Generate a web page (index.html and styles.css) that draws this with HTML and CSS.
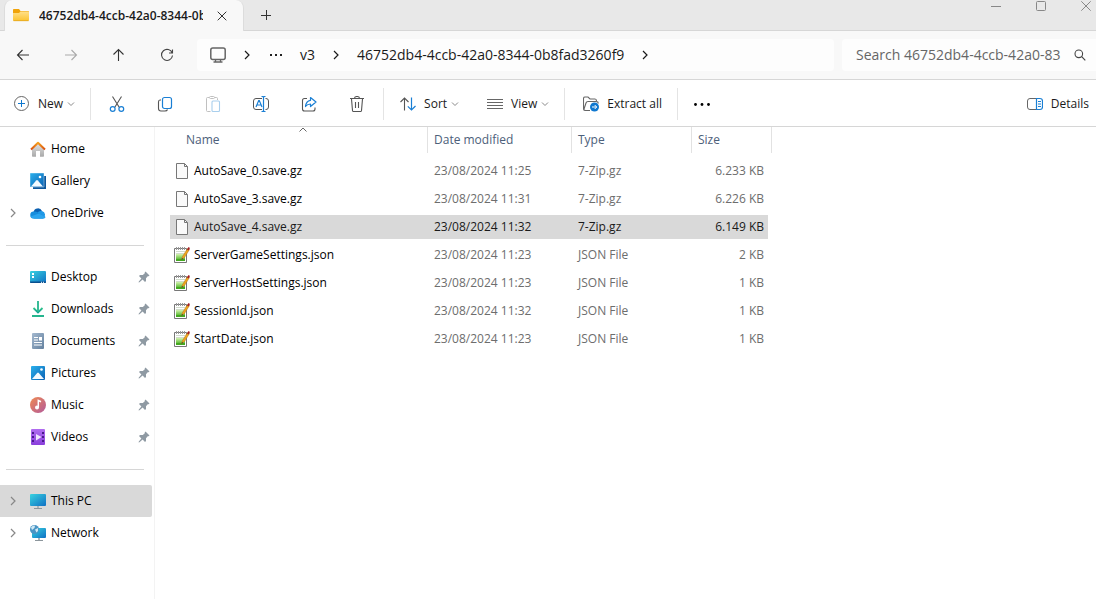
FILE: index.html
```html
<!DOCTYPE html>
<html lang="en">
<head>
    <meta charset="UTF-8">
    <meta name="viewport" content="width=device-width, initial-scale=1.0">
    <title>46752db4-4ccb-42a0-8344-0b8fad3260f9</title>
    <link rel="stylesheet" href="styles.css">
</head>
<body>
    <!-- Shared icons -->
    <svg class="sprite" aria-hidden="true">
        <defs>
            <linearGradient id="blue" x1="0" y1="0" x2="1" y2="1"><stop offset="0" stop-color="#2bb0ec"/><stop offset="1" stop-color="#0a62b4"/></linearGradient>
            <linearGradient id="teal" x1="0" y1="0" x2="1" y2="1"><stop offset="0" stop-color="#38d3e0"/><stop offset="1" stop-color="#0f70c4"/></linearGradient>
            <linearGradient id="green" x1="0" y1="0" x2="0" y2="1"><stop offset="0" stop-color="#d4f3b0"/><stop offset="1" stop-color="#35a80c"/></linearGradient>
            <linearGradient id="down" x1="0" y1="0" x2="0" y2="1"><stop offset="0" stop-color="#2fc48a"/><stop offset="1" stop-color="#10a094"/></linearGradient>
            <linearGradient id="music" x1="0" y1="0" x2="1" y2="1"><stop offset="0" stop-color="#f08a50"/><stop offset="1" stop-color="#b25a9c"/></linearGradient>
            <linearGradient id="video" x1="0" y1="0" x2="0" y2="1"><stop offset="0" stop-color="#b06cf0"/><stop offset="1" stop-color="#8a3fdc"/></linearGradient>
            <linearGradient id="doc" x1="0" y1="0" x2="1" y2="1"><stop offset="0" stop-color="#a3b8cf"/><stop offset="1" stop-color="#64819f"/></linearGradient>
            <linearGradient id="wall" x1="0" y1="0" x2="0" y2="1"><stop offset="0" stop-color="#e6e6e6"/><stop offset="1" stop-color="#a9a9a9"/></linearGradient>
            <linearGradient id="roof" x1="0" y1="0" x2="0" y2="1"><stop offset="0" stop-color="#f6a01c"/><stop offset="1" stop-color="#d94f10"/></linearGradient>
            <linearGradient id="yellow" x1="0" y1="0" x2="0" y2="1"><stop offset="0" stop-color="#ffe08a"/><stop offset="1" stop-color="#fcc32f"/></linearGradient>
        </defs>
        <symbol id="file" viewBox="0 0 16 16">
            <path d="M2.500.5h8l3 3v12h-11z" fill="#fafafa" stroke="#777"/>
            <path d="M10.500.5v3h3" fill="none" stroke="#777"/>
        </symbol>
        <symbol id="json" viewBox="0 0 16 16">
            <path d="M.5 1.500h12v14H.5z" fill="#fff" stroke="#777"/>
            <path d="M2 4.500h9M2 6.500h9" stroke="#d0dccb"/>
            <path d="M2 7h9v7H2z" fill="url(#green)"/>
            <path d="M2 12h9v2H2z" fill="#44a820"/>
            <path d="M2.500 0v3M4.500 0v3M6.500 0v3M8.500 0v3M10.500 0v3" stroke="#999"/>
            <path d="M7.500 12.500l1-3 5-8 2 1-5 8z" fill="#f0a51c" stroke="#a87622" stroke-width=".5"/>
            <path d="M13 2.500L14.500 0l1.500 1-1.500 2.500z" fill="#a31b25"/>
            <path d="M7.500 13l.5-2 1 .8z" fill="#333"/>
        </symbol>
        <symbol id="pin" viewBox="0 0 12 12">
            <path d="M7.500.5L11.500 4.500l-1 .8-.8-.1-1.700 2 0 2.800-1 1-2.400-2.400L1.500 11.200l-.9.200.2-.9L3.400 7.400 1 5l1-1 2.800 0L6.800 2.300l-.1-.8z" fill="#8f9aa3"/>
        </symbol>
        <symbol id="next" viewBox="0 0 10 10">
            <path d="M3 1l4 4-4 4" fill="none" stroke="currentColor" stroke-width="1.200"/>
        </symbol>
        <symbol id="drop" viewBox="0 0 8 8">
            <path d="M1 2.500l3 3 3-3" fill="none" stroke="#8a8a8a"/>
        </symbol>
    </svg>

    <!-- Tab strip -->
    <header class="tab-strip">
        <div class="tab">
            <svg class="icon" viewBox="0 0 16 16"><path d="M0 1.500Q0 1 1 1h5l1.500 2H15q1 0 1 1v4H0z" fill="#f0a30a"/><path d="M0 5h6l1.500-1.500H15q1 0 1 1V12q0 1-1 1H1q-1 0-1-1z" fill="url(#yellow)"/><path d="M.5 12.700h15" stroke="#e0a01c" stroke-width=".7"/></svg>
            <span class="tab-title">46752db4-4ccb-42a0-8344-0b8fad3260f9</span>
            <button class="plain-button" aria-label="Close tab"><svg class="icon-small" viewBox="0 0 10 10"><path d="M.7.7l8.600 8.600M9.300.7L.7 9.300" stroke="#333"/></svg></button>
        </div>
        <button class="plain-button new-tab" aria-label="New tab"><svg class="icon-small" viewBox="0 0 10 10"><path d="M5.500 0v10M0 5.500h10" stroke="#333"/></svg></button>
        <div class="window-buttons">
            <button class="plain-button" aria-label="Minimize"><svg class="icon-small" viewBox="0 0 10 10"><path d="M0 5.500h10" stroke="#888"/></svg></button>
            <button class="plain-button" aria-label="Maximize"><svg class="icon-small" viewBox="0 0 10 10"><rect x=".5" y=".5" width="9" height="9" rx="1" fill="none" stroke="#888"/></svg></button>
            <button class="plain-button" aria-label="Close"><svg class="icon-small" viewBox="0 0 10 10"><path d="M.3.3l9.400 9.400M9.700.3L.3 9.700" stroke="#888"/></svg></button>
        </div>
    </header>

    <!-- Navigation and address -->
    <div class="nav-bar">
        <div class="nav-buttons">
            <button class="plain-button" aria-label="Back"><svg class="icon" viewBox="0 0 16 16"><path d="M14 8H2.500M7.500 3l-5 5 5 5" fill="none" stroke="#333" stroke-width="1.100"/></svg></button>
            <button class="plain-button" aria-label="Forward" disabled><svg class="icon" viewBox="0 0 16 16"><path d="M2 8h11.500M8.500 3l5 5-5 5" fill="none" stroke="#aaa" stroke-width="1.100"/></svg></button>
            <button class="plain-button" aria-label="Up"><svg class="icon" viewBox="0 0 16 16"><path d="M7.500 14V2.500M2.500 7.500l5-5 5 5" fill="none" stroke="#333" stroke-width="1.100"/></svg></button>
            <button class="plain-button" aria-label="Refresh"><svg class="icon" viewBox="0 0 16 16"><path d="M13.200 6A5.500 5.500 0 1 0 13.500 8.500M13.500 2.500V6H10" fill="none" stroke="#444" stroke-width="1.100"/></svg></button>
        </div>
        <nav class="address-bar" aria-label="Address">
            <svg class="icon" viewBox="0 0 16 16"><rect x=".8" y="1" width="14.400" height="11.500" rx="2" fill="none" stroke="#666" stroke-width="1.500"/><path d="M5.500 13v1.700M10.500 13v1.700M3.500 15h9" stroke="#666" stroke-width="1.300"/></svg>
            <svg class="crumb-arrow"><use href="#next"/></svg>
            <button class="plain-button" aria-label="More folders"><svg class="icon" viewBox="0 0 16 16"><path d="M2 7h2v2H2zM7 7h2v2H7zM12 7h2v2h-2z" fill="#222"/></svg></button>
            <a class="crumb" href="#">v3</a>
            <svg class="crumb-arrow"><use href="#next"/></svg>
            <a class="crumb" href="#">46752db4-4ccb-42a0-8344-0b8fad3260f9</a>
            <svg class="crumb-arrow"><use href="#next"/></svg>
        </nav>
        <div class="search-box">
            <input type="text" class="search-input" aria-label="Search" placeholder="Search 46752db4-4ccb-42a0-83">
            <svg class="search-icon" viewBox="0 0 12 12"><circle cx="4.800" cy="4.800" r="3.800" fill="none" stroke="#444" stroke-width="1.100"/><path d="M7.700 7.700L11.300 11.300" stroke="#444" stroke-width="1.200"/></svg>
        </div>
    </div>

    <!-- Commands -->
    <div class="toolbar">
        <div class="tool-group">
            <button class="tool-button">
                <svg class="icon" viewBox="0 0 16 16"><circle cx="7.500" cy="7.500" r="7" fill="none" stroke="#666"/><path d="M7.500 4v7M4 7.500h7" stroke="#0f78d0"/></svg>
                New
                <svg class="drop"><use href="#drop"/></svg>
            </button>
        </div>
        <div class="tool-group icon-group">
            <button class="icon-button" aria-label="Cut"><svg class="icon" viewBox="0 0 16 16"><path d="M3.500.5l6.700 10.700M12.500.5L5.800 11.200" stroke="#555" stroke-width="1.100"/><circle cx="3.700" cy="13" r="2.400" fill="none" stroke="#1a7fd4" stroke-width="1.200"/><circle cx="12.300" cy="13" r="2.400" fill="none" stroke="#1a7fd4" stroke-width="1.200"/></svg></button>
            <button class="icon-button" aria-label="Copy"><svg class="icon" viewBox="0 0 16 16"><path d="M4 4H3Q1.500 4 1.500 6v6.500Q1.500 15 4 15h4q2 0 2.500-1.500" fill="none" stroke="#555" stroke-width="1.100"/><rect x="5.500" y="1.500" width="9" height="11" rx="2" fill="#fff" stroke="#1a7fd4" stroke-width="1.200"/></svg></button>
            <button class="icon-button" aria-label="Paste" disabled><svg class="icon" viewBox="0 0 16 16"><path d="M5.500 15.500h-3q-1 0-1-1v-12q0-1 1-1h2M9.500 1.500h2q1 0 1 1V4" fill="none" stroke="#c0c0c0"/><rect x="4.500" y=".5" width="5" height="2" rx="1" fill="#fff" stroke="#c0c0c0"/><rect x="7" y="5" width="7.500" height="10.500" rx="1" fill="#fff" stroke="#a9cfed" stroke-width="1.100"/></svg></button>
            <button class="icon-button" aria-label="Rename"><svg class="icon" viewBox="0 0 16 16"><path d="M9 2.500H3Q.5 2.500.5 5v6q0 2.500 2.500 2.500h6M12.500 2.500h.5q2.500 0 2.500 2.500v6q0 2.500-2.500 2.500h-.5" fill="none" stroke="#555"/><path d="M3 11l2.700-6.500h.6L9 11M4 9h4M10.500 1v14M8.500.5h1q1 0 1 1 0-1 1-1h1M8.500 15.500h1q1 0 1-1 0 1 1 1h1" fill="none" stroke="#1a7fd4" stroke-width="1.200"/></svg></button>
            <button class="icon-button" aria-label="Share"><svg class="icon" viewBox="0 0 16 16"><path d="M6 2.500H3.500q-2 0-2 2V13q0 2 2 2H12q2 0 2-2v-1.500" fill="none" stroke="#555" stroke-width="1.100"/><path d="M9.500 1.500L15 6l-5.500 4.500V8Q6.500 8 4.500 10.500 5 5 9.500 4.300z" fill="#fff" stroke="#1a7fd4" stroke-width="1.200" stroke-linejoin="round"/></svg></button>
            <button class="icon-button" aria-label="Delete"><svg class="icon" viewBox="0 0 16 16"><path d="M1 2.500h14M5.500 2.500Q5.500.5 8 .5t2.500 2M2.500 3l1 11.500q.1 1 1 1h7q.9 0 1-1l1-11.500M6.500 6v6M9.500 6v6" fill="none" stroke="#555" stroke-width="1.100"/></svg></button>
        </div>
        <div class="tool-group wide-group">
            <button class="tool-button">
                <svg class="icon" viewBox="0 0 16 16"><path d="M4.500 14.500V2M.5 6l4-4 4 4" fill="none" stroke="#555" stroke-width="1.100"/><path d="M11.500 1.500V14M7.800 10.300l3.700 3.700 4-4" fill="none" stroke="#1a7fd4" stroke-width="1.200"/></svg>
                Sort
                <svg class="drop"><use href="#drop"/></svg>
            </button>
            <button class="tool-button">
                <svg class="icon" viewBox="0 0 16 16"><path d="M0 3.500h16M0 6.500h16M0 9.500h16M0 12.500h16" stroke="#666"/></svg>
                View
                <svg class="drop"><use href="#drop"/></svg>
            </button>
        </div>
        <div class="tool-group extract-group">
            <button class="tool-button">
                <svg class="icon" viewBox="0 0 16 16"><path d="M7 14.500H2.500q-2 0-2-2v-10q0-1.500 1.500-1.500h3l2 2h5q1.500 0 1.500 2M1 13l2-6q.5-1.500 2-1.500h8q2.500 0 2 2" fill="none" stroke="#666" stroke-width="1.100"/><circle cx="11.500" cy="11" r="4.500" fill="#0f78d0"/><path d="M9 11h4.500M11.700 9l2 2-2 2" fill="none" stroke="#fff"/></svg>
                Extract all
            </button>
        </div>
        <button class="icon-button" aria-label="See more"><svg class="icon" viewBox="0 0 16 16"><circle cx="1.500" cy="8.500" r="1.400"/><circle cx="8" cy="8.500" r="1.400"/><circle cx="14.500" cy="8.500" r="1.400"/></svg></button>
        <button class="tool-button details-button">
            <svg class="icon" viewBox="0 0 16 16"><path d="M9.500 2.500H3Q.5 2.500.5 5v6q0 2.500 2.500 2.500h6.500" fill="none" stroke="#666"/><path d="M9.500 2.500H13q2.500 0 2.500 2.500v6q0 2.500-2.500 2.500H9.500zM11 5.500h3M11 8h3M11 10.500h3" fill="none" stroke="#1a7fd4" stroke-width="1.200"/></svg>
            Details
        </button>
    </div>

    <div class="content">
        <!-- Sidebar -->
        <nav class="sidebar" aria-label="Folders">
            <a class="side-item" href="#">
                <svg class="icon" viewBox="0 0 16 16"><path d="M2 7l6-5.500L14 7v8q0 .7-.7.700H10V10H6v5.700H2.700Q2 15.700 2 15z" fill="url(#wall)"/><path d="M1 8.500L8 1.800l7 6.700" fill="none" stroke="url(#roof)" stroke-width="2" stroke-linejoin="round"/></svg>
                <span class="side-label">Home</span>
            </a>
            <a class="side-item" href="#">
                <svg class="icon" viewBox="0 0 16 16"><path d="M3 3h13v13H3z" fill="#0c579c"/><path d="M0 0h14v14H0z" fill="url(#blue)" stroke="#fff" stroke-width=".4"/><path d="M1 13.500l5.200-6q.8-.8 1.600 0l5.200 6z" fill="#f3faff"/><circle cx="10" cy="4" r="1.300" fill="#fff"/></svg>
                <span class="side-label">Gallery</span>
            </a>
            <a class="side-item" href="#">
                <svg class="expand"><use href="#next"/></svg>
                <svg class="icon" viewBox="0 0 16 16"><path d="M3.500 7A4.500 4.500 0 0 1 12 6l-3 5z" fill="#0a5fb0"/><path d="M12 6a4 4 0 0 1 .8 7.500H4L8 7q2-1.500 4-1z" fill="#1f98e6"/><path d="M3.500 13.500A3.500 3.500 0 0 1 4 6.500q2-.3 4 1l7.500 4.500q-.8 1.500-2.700 1.500z" fill="#168ddd"/><path d="M3.500 13.500Q1 13.300.5 11.500L9 8.500l6.500 3.500q-.8 1.500-2.700 1.500z" fill="#2ba4ee"/></svg>
                <span class="side-label">OneDrive</span>
            </a>
            <hr class="side-line">
            <a class="side-item" href="#">
                <svg class="icon" viewBox="0 0 16 16"><rect y="2" width="16" height="12" rx="1" fill="url(#teal)"/><path d="M2 4h2v2H2zM2 7h2v2H2z" fill="#fff"/><path d="M0 12.500h16v.5q0 1-1 1H1q-1 0-1-1z" fill="#0a4f8e"/><path d="M11 13.300h1M13 13.300h1" stroke="#fff"/></svg>
                <span class="side-label">Desktop</span>
                <svg class="pin"><use href="#pin"/></svg>
            </a>
            <a class="side-item" href="#">
                <svg class="icon" viewBox="0 0 16 16"><path d="M3.500 7L8 11.500 12.500 7" fill="none" stroke="url(#down)" stroke-width="1.800"/><path d="M7.100 0h1.800v11H7.100zM2 14h12v2H2z" fill="#25b58e"/></svg>
                <span class="side-label">Downloads</span>
                <svg class="pin"><use href="#pin"/></svg>
            </a>
            <a class="side-item" href="#">
                <svg class="icon" viewBox="0 0 16 16"><rect x="2" y="0" width="12" height="16" rx="1" fill="url(#doc)"/><path d="M4 4.500h4M4 7h4M4 9.500h8M4 12h8" stroke="#fff"/><path d="M9 4h3v3.500H9z" fill="#fff"/></svg>
                <span class="side-label">Documents</span>
                <svg class="pin"><use href="#pin"/></svg>
            </a>
            <a class="side-item" href="#">
                <svg class="icon" viewBox="0 0 16 16"><rect x="1" y="1" width="14" height="14" rx="1" fill="url(#blue)"/><path d="M2 14l5.200-6q.8-.8 1.600 0L14 14z" fill="#f3faff"/><circle cx="11.500" cy="4.500" r="1.300" fill="#fff"/></svg>
                <span class="side-label">Pictures</span>
                <svg class="pin"><use href="#pin"/></svg>
            </a>
            <a class="side-item" href="#">
                <svg class="icon" viewBox="0 0 16 16"><circle cx="8" cy="8" r="8" fill="url(#music)"/><circle cx="7" cy="10.500" r="2" fill="#fff"/><path d="M8.300 10.500V3.500l2.700 1.200" fill="none" stroke="#fff" stroke-width="1.500"/></svg>
                <span class="side-label">Music</span>
                <svg class="pin"><use href="#pin"/></svg>
            </a>
            <a class="side-item" href="#">
                <svg class="icon" viewBox="0 0 16 16"><rect x="1" y="0" width="14" height="16" rx="1" fill="url(#video)"/><path d="M2 3h2v2H2zM2 7h2v2H2zM2 11h2v2H2zM12 3h2v2h-2zM12 7h2v2h-2zM12 11h2v2h-2z" fill="#4a1a8c"/><path d="M6 5l5.500 3L6 11.500z" fill="#f0e4ff"/></svg>
                <span class="side-label">Videos</span>
                <svg class="pin"><use href="#pin"/></svg>
            </a>
            <hr class="side-line">
            <a class="side-item active" href="#" aria-current="page">
                <svg class="expand"><use href="#next"/></svg>
                <svg class="icon" viewBox="0 0 16 16"><rect y="1" width="16" height="12" rx="1" fill="url(#teal)"/><path d="M7 13h2v2H7z" fill="#aab2b8"/><path d="M4 15.500h8" stroke="#8c969c"/></svg>
                <span class="side-label">This PC</span>
            </a>
            <a class="side-item" href="#">
                <svg class="expand"><use href="#next"/></svg>
                <svg class="icon" viewBox="0 0 16 16"><rect x="2" y="3" width="14" height="10" rx="1" fill="url(#teal)"/><path d="M8 13h2v2H8z" fill="#aab2b8"/><path d="M5 15.500h8" stroke="#8c969c"/><circle cx="4.500" cy="4.500" r="4.500" fill="#4a94c4"/><path d="M1 2.500Q3 0 5 .8L4.500 3 2 5zM5 4.500l3-1.500q.7 3-1.500 4.500z" fill="#cfe9f5"/></svg>
                <span class="side-label">Network</span>
            </a>
        </nav>

        <!-- File list -->
        <main class="file-list">
            <table class="files">
                <thead>
                    <tr>
                        <th class="col-name" aria-sort="ascending"><span class="head-label">Name</span><svg class="sort-arrow" viewBox="0 0 8 5"><path d="M.5 4.500L4 1l3.500 3.500" fill="none" stroke="#666"/></svg></th>
                        <th class="col-date"><span class="head-label">Date modified</span></th>
                        <th class="col-type"><span class="head-label">Type</span></th>
                        <th class="col-size"><span class="head-label">Size</span></th>
                    </tr>
                </thead>
                <tbody>
                    <tr>
                        <td><span class="file-name"><svg class="icon"><use href="#file"/></svg>AutoSave_0.save.gz</span></td>
                        <td>23/08/2024 11:25</td><td>7-Zip.gz</td><td>6.233 KB</td>
                    </tr>
                    <tr>
                        <td><span class="file-name"><svg class="icon"><use href="#file"/></svg>AutoSave_3.save.gz</span></td>
                        <td>23/08/2024 11:31</td><td>7-Zip.gz</td><td>6.226 KB</td>
                    </tr>
                    <tr class="selected">
                        <td><span class="file-name"><svg class="icon"><use href="#file"/></svg>AutoSave_4.save.gz</span></td>
                        <td>23/08/2024 11:32</td><td>7-Zip.gz</td><td>6.149 KB</td>
                    </tr>
                    <tr>
                        <td><span class="file-name"><svg class="icon"><use href="#json"/></svg>ServerGameSettings.json</span></td>
                        <td>23/08/2024 11:23</td><td>JSON File</td><td>2 KB</td>
                    </tr>
                    <tr>
                        <td><span class="file-name"><svg class="icon"><use href="#json"/></svg>ServerHostSettings.json</span></td>
                        <td>23/08/2024 11:23</td><td>JSON File</td><td>1 KB</td>
                    </tr>
                    <tr>
                        <td><span class="file-name"><svg class="icon"><use href="#json"/></svg>SessionId.json</span></td>
                        <td>23/08/2024 11:32</td><td>JSON File</td><td>1 KB</td>
                    </tr>
                    <tr>
                        <td><span class="file-name"><svg class="icon"><use href="#json"/></svg>StartDate.json</span></td>
                        <td>23/08/2024 11:23</td><td>JSON File</td><td>1 KB</td>
                    </tr>
                </tbody>
            </table>
        </main>
    </div>
</body>
</html>
```
FILE: styles.css
```css
* {
    box-sizing: border-box;
}
body {
    margin: 0;
    min-height: 100vh;
    display: flex;
    flex-direction: column;
    font-family: "Open Sans", "Noto Sans", sans-serif;
    font-size: 12px;
    line-height: 16px;
    color: #000;
    background-color: #fff;
}
a {
    color: inherit;
    text-decoration: none;
}
button {
    font: inherit;
    color: #1a1a1a;
    background: none;
    border: none;
    padding: 0;
}
svg {
    display: block;
    flex: none;
}
.sprite {
    position: absolute;
    width: 0;
    height: 0;
}
.icon {
    width: 16px;
    height: 16px;
}
.icon-small {
    width: 10px;
    height: 10px;
}
.plain-button {
    display: flex;
    align-items: center;
    justify-content: center;
}

/* Tab strip */
.tab-strip {
    display: flex;
    height: 31px;
    padding-left: 4px;
    background-color: #e8e8e8;
    border-bottom: 1px solid #d6d6d6;
}
.tab {
    display: flex;
    align-items: center;
    width: 240px;
    height: 31px;
    padding: 0 16px 0 8px;
    background-color: #f8f8f8;
    border: 1px solid #dcdcdc;
    border-width: 0 1px;
    border-radius: 8px 8px 0 0;
}
.tab-title {
    flex: 1;
    margin: 0 14px 0 10px;
    overflow: hidden;
    white-space: nowrap;
    font-weight: 600;
    color: #1a1a1a;
}
.new-tab {
    width: 44px;
}
.window-buttons {
    display: flex;
    align-items: flex-start;
    gap: 35px;
    margin-left: auto;
    padding: 1px 5px 0 0;
}

/* Navigation bar */
.nav-bar {
    display: flex;
    align-items: center;
    gap: 8px;
    height: 49px;
    background-color: #f8f8f8;
    border-bottom: 1px solid #d6d6d6;
}
.nav-buttons {
    display: flex;
    gap: 32px;
    padding: 0 14px 0 15px;
}
.address-bar {
    display: flex;
    flex: 1;
    align-items: center;
    height: 32px;
    padding-left: 13px;
    background-color: #fdfdfd;
    border-radius: 4px;
    font-size: 14px;
    color: #1a1a1a;
}
.crumb-arrow {
    width: 10px;
    height: 10px;
    margin: 0 16px;
}
.crumb {
    white-space: nowrap;
}
.address-bar .plain-button {
    margin-right: 16px;
}
.search-box {
    display: flex;
    align-items: center;
    width: 254px;
    height: 32px;
    padding: 0 10px 0 14px;
    background-color: #fdfdfd;
    border-radius: 4px 0 0 4px;
}
.search-input {
    flex: 1;
    min-width: 0;
    margin-right: 12px;
    padding: 0;
    border: none;
    outline: none;
    background: none;
    font: inherit;
    font-size: 14px;
}
.search-input::placeholder {
    color: #666;
}
.search-icon {
    width: 12px;
    height: 12px;
}

/* Toolbar */
.toolbar {
    display: flex;
    align-items: center;
    height: 47px;
    padding-top: 2px;
    border-bottom: 1px solid #d6d6d6;
}
.tool-group {
    display: flex;
    align-items: center;
    height: 32px;
    padding: 0 15px 0 14px;
    border-right: 1px solid #e4e4e4;
}
.icon-group {
    padding: 0 2px;
}
.wide-group {
    gap: 28px;
    padding: 0 15px 0 16px;
}
.extract-group {
    padding: 0 15px 0 18px;
}
.tool-button {
    display: flex;
    align-items: center;
    gap: 8px;
    white-space: nowrap;
}
.icon-button {
    display: flex;
    align-items: center;
    justify-content: center;
    width: 48px;
    height: 32px;
}
.drop {
    width: 8px;
    height: 8px;
    margin-left: -4px;
}
.details-button {
    margin-left: auto;
    padding-right: 7px;
}

/* Sidebar */
.content {
    display: flex;
    flex: 1;
}
.sidebar {
    width: 155px;
    padding: 6px 2px 0 0;
    border-right: 1px solid #f3f3f3;
}
.side-item {
    display: flex;
    align-items: center;
    height: 32px;
    padding: 0 2px 0 30px;
}
.side-item.active {
    background-color: #d9d9d9;
    border-radius: 0 2px 2px 0;
}
.side-label {
    flex: 1;
    margin-left: 5px;
}
.expand {
    width: 10px;
    height: 10px;
    margin: 0 12px 0 -22px;
    color: #888;
}
.pin {
    width: 12px;
    height: 12px;
}
.side-line {
    height: 1px;
    margin: 16px 8px 15px 6px;
    border: none;
    background-color: #d6d6d6;
}

/* File list */
.file-list {
    flex: 1;
    padding-left: 15px;
}
.files {
    border-collapse: separate;
    border-spacing: 0;
    table-layout: fixed;
    width: 602px;
}
.files th {
    position: relative;
    height: 30px;
    padding: 0 0 4px;
    font-weight: normal;
    text-align: left;
    color: #4c607a;
}
.col-name {
    width: 258px;
}
.col-date {
    width: 144px;
}
.col-type {
    width: 120px;
}
.head-label {
    display: block;
    height: 26px;
    padding-left: 6px;
    line-height: 26px;
    border-right: 1px solid #e2e2e2;
}
.col-name .head-label {
    padding-left: 16px;
}
.sort-arrow {
    position: absolute;
    top: 0;
    left: 50%;
    width: 8px;
    height: 5px;
}
.files td {
    height: 28px;
    padding: 0 0 0 6px;
    border: 2px solid transparent;
    border-width: 2px 0;
    background-clip: padding-box;
    color: #6d6d6d;
}
.files td:first-child {
    padding-left: 4px;
    color: #000;
}
.files td:last-child {
    padding: 0 4px 0 0;
    border-right-width: 4px;
    text-align: right;
}
.files .selected td {
    background-color: #d9d9d9;
    color: #1a1a1a;
}
.file-name {
    display: flex;
    align-items: center;
    gap: 4px;
}
```
